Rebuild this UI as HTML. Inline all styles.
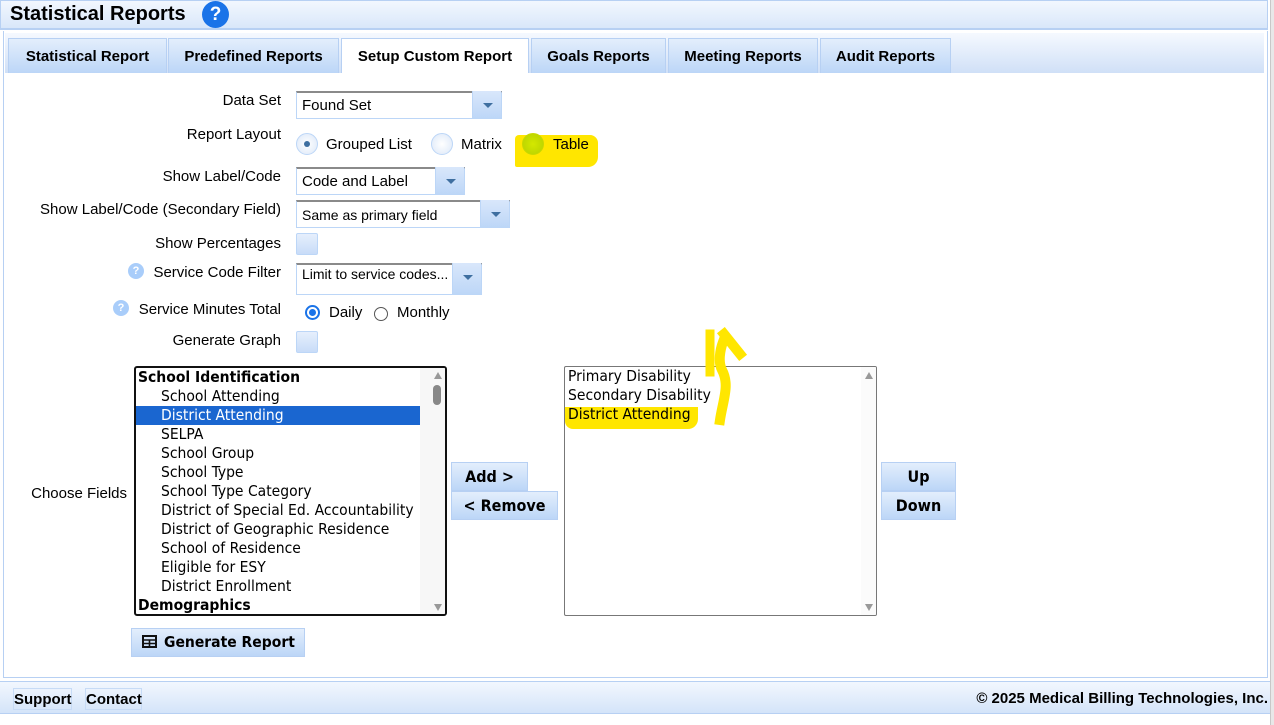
<!DOCTYPE html>
<html><head><meta charset="utf-8"><style>
*{box-sizing:border-box;margin:0;padding:0}
body{width:1274px;height:725px;position:relative;background:#fff;font-family:"Liberation Sans",Arial,sans-serif;overflow:hidden;color:#000}
.a{position:absolute}
.hdr{left:0;top:0;width:1268px;height:30px;background:linear-gradient(#f2f7fe,#d9e7fa);border:1px solid #b7d0f3;border-bottom:2px solid #b7d0f3}
.main{left:3px;top:31px;width:1265px;height:647px;border:1px solid #b7d0f3;border-top:none}
.tabbar{left:5px;top:33px;width:1259px;height:40px;background:linear-gradient(#f5f9ff,#d0e0f7)}
.tab{position:absolute;top:38px;height:35px;background:linear-gradient(#e3eefc,#bcd6f7);border:1px solid #b7d0f3;border-bottom:none;font-weight:bold;font-size:15px;text-align:center;line-height:35px}
.tab.act{background:#fff}
.lbl{position:absolute;font-size:15px;text-align:right;right:993px;white-space:nowrap}
.sel{position:absolute;height:28px;border:1px solid #bcd6f7;border-top:2px solid #8a8a8a;background:#fff;font-size:15px;line-height:26px;padding-left:5px}
.sel .b{position:absolute;right:0;top:-2px;width:29px;height:28px;background:linear-gradient(#d9e7fb,#bcd6f7);border-left:1px solid #bcd6f7}
.sel .b:after{content:"";position:absolute;left:10px;top:12px;border-left:5px solid transparent;border-right:5px solid transparent;border-top:5px solid #3f6fa0}
.cb{position:absolute;width:22px;height:22px;border:1px solid #bcd6f7;background:linear-gradient(#e6effc,#c8dcf8);border-radius:2px}
.rad{position:absolute;width:22px;height:22px;border-radius:50%;border:1px solid #bcd6f7;background:radial-gradient(#fff,#dbe7f8)}
.txt{position:absolute;font-size:15px;white-space:nowrap}
.list{position:absolute;font-family:"DejaVu Sans Condensed","DejaVu Sans",sans-serif;font-size:15.5px;line-height:19px;background:#fff}
.list div{height:19px;white-space:nowrap;padding-left:25px}
.list div.g{font-weight:bold;padding-left:2px}
.btn{position:absolute;background:linear-gradient(#e3eefc,#bcd6f7);border:1px solid #b7d0f3;font-family:"DejaVu Sans Condensed","DejaVu Sans",sans-serif;font-weight:bold;font-size:16px;text-align:center;line-height:27px}
.q{position:absolute;width:16px;height:16px;border-radius:50%;background:#a9cdfa;color:#fff;font-size:11px;font-weight:bold;text-align:center;line-height:16px}
</style></head><body>
<div class="a hdr"></div>
<div class="a" style="left:10px;top:3px;font-size:20px;font-weight:bold">Statistical Reports</div>
<div class="a" style="left:202px;top:1px;width:27px;height:27px;border-radius:50%;background:#1a73e8;color:#fff;font-weight:bold;font-size:19px;text-align:center;line-height:27px">?</div>
<div class="a main"></div>
<div class="a tabbar"></div>
<div class="tab" style="left:8px;width:159px">Statistical Report</div>
<div class="tab" style="left:168px;width:171px">Predefined Reports</div>
<div class="tab act" style="left:341px;width:188px">Setup Custom Report</div>
<div class="tab" style="left:531px;width:135px">Goals Reports</div>
<div class="tab" style="left:668px;width:150px">Meeting Reports</div>
<div class="tab" style="left:820px;width:131px">Audit Reports</div>

<div class="lbl" style="top:92px">Data Set</div>
<div class="sel" style="left:296px;top:91px;width:206px">Found Set<div class="b"></div></div>

<div class="lbl" style="top:126px">Report Layout</div>
<div class="a" style="left:515px;top:135px;width:83px;height:32px;background:#ffe600;border-radius:4px 8px 10px 2px"></div>
<div class="rad" style="left:296px;top:133px"><div style="position:absolute;left:7px;top:7px;width:6px;height:6px;border-radius:50%;background:#3f6fa0"></div></div>
<div class="txt" style="left:326px;top:136px">Grouped List</div>
<div class="rad" style="left:431px;top:133px"></div>
<div class="txt" style="left:461px;top:136px">Matrix</div>
<div class="a" style="left:522px;top:133px;width:22px;height:22px;border-radius:50%;background:radial-gradient(#d4e800,#b6d000);border:1px solid #c8d800"></div>
<div class="txt" style="left:553px;top:136px">Table</div>

<div class="lbl" style="top:168px">Show Label/Code</div>
<div class="sel" style="left:296px;top:167px;width:169px">Code and Label<div class="b"></div></div>
<div class="lbl" style="top:201px">Show Label/Code (Secondary Field)</div>
<div class="sel" style="left:296px;top:200px;width:214px;font-size:14px">Same as primary field<div class="b"></div></div>
<div class="lbl" style="top:235px">Show Percentages</div>
<div class="cb" style="left:296px;top:233px"></div>
<div class="q" style="left:128px;top:263px">?</div>
<div class="lbl" style="top:264px">Service Code Filter</div>
<div class="sel" style="left:296px;top:263px;width:186px;height:32px;font-size:14px;line-height:16px;padding-top:1px">Limit to service codes...<div class="b" style="height:32px"></div></div>
<div class="q" style="left:113px;top:300px">?</div>
<div class="lbl" style="top:301px">Service Minutes Total</div>
<div class="a" style="left:305px;top:305px;width:15px;height:15px;border-radius:50%;border:2px solid #1a73e8"><div style="position:absolute;left:2px;top:2px;width:7px;height:7px;border-radius:50%;background:#1a73e8"></div></div>
<div class="txt" style="left:329px;top:304px">Daily</div>
<div class="a" style="left:374px;top:307px;width:14px;height:14px;border-radius:50%;border:1px solid #555"></div>
<div class="txt" style="left:397px;top:304px">Monthly</div>
<div class="lbl" style="top:332px">Generate Graph</div>
<div class="cb" style="left:296px;top:331px"></div>

<div class="lbl" style="top:485px;right:1147px">Choose Fields</div>
<div class="list" style="left:134px;top:366px;width:313px;height:250px;border:2px solid #111;border-radius:3px;overflow:hidden">
<div class="g">School Identification</div><div>School Attending</div><div style="background:#1a66d0;color:#fff;width:295px">District Attending</div><div>SELPA</div><div>School Group</div><div>School Type</div><div>School Type Category</div><div>District of Special Ed. Accountability</div><div>District of Geographic Residence</div><div>School of Residence</div><div>Eligible for ESY</div><div>District Enrollment</div><div class="g">Demographics</div>
<div class="a" style="right:0;top:0;width:15px;height:246px;background:#f7f7f7"></div>
<div class="a" style="right:3px;top:4px;border-left:4px solid transparent;border-right:4px solid transparent;border-bottom:7px solid #999;height:0;padding:0"></div>
<div class="a" style="right:4px;top:17px;width:8px;height:20px;border-radius:4px;background:#888;padding:0"></div>
<div class="a" style="right:3px;top:236px;border-left:4px solid transparent;border-right:4px solid transparent;border-top:7px solid #999;height:0;padding:0"></div>
</div>

<div class="btn" style="left:451px;top:462px;width:77px;height:29px">Add &gt;</div>
<div class="btn" style="left:451px;top:491px;width:107px;height:29px">&lt; Remove</div>

<div class="list" style="left:564px;top:366px;width:313px;height:250px;border:1px solid #777;border-radius:2px;overflow:hidden">
<div class="a" style="left:0;top:40px;width:133px;height:22px;background:#ffe600;border-radius:0 0 10px 8px;padding:0"></div>
<div style="padding-left:3px;position:relative">Primary Disability</div><div style="padding-left:3px;position:relative">Secondary Disability</div><div style="padding-left:3px;position:relative">District Attending</div>
<div class="a" style="right:0;top:0;width:15px;height:248px;background:#fbfbfb;padding:0"></div>
<div class="a" style="right:3px;top:5px;border-left:4px solid transparent;border-right:4px solid transparent;border-bottom:7px solid #999;height:0;padding:0"></div>
<div class="a" style="right:3px;top:237px;border-left:4px solid transparent;border-right:4px solid transparent;border-top:7px solid #999;height:0;padding:0"></div>
</div>
<svg class="a" style="left:690px;top:320px" width="70" height="110"><g stroke="#ffe600" fill="none" stroke-linecap="square"><path d="M30 100 C33 80 40 65 32 50 C28 42 30 30 33 22" stroke-width="10"/><path d="M20 14 L20 52" stroke-width="9"/><path d="M34 14 L50 34" stroke-width="10"/></g></svg>

<div class="btn" style="left:881px;top:462px;width:75px;height:29px">Up</div>
<div class="btn" style="left:881px;top:491px;width:75px;height:29px">Down</div>

<div class="btn" style="left:131px;top:628px;width:174px;height:29px;text-align:left;padding-left:32px;font-size:15.5px">Generate Report</div>
<svg class="a" style="left:142px;top:635px" width="15" height="13"><rect x="1" y="1" width="13" height="11" fill="none" stroke="#111" stroke-width="2"/><path d="M1 5H14M1 8.5H14M7.5 5V12" stroke="#111" stroke-width="1.6"/></svg>

<div class="a" style="left:0;top:681px;width:1270px;height:33px;background:linear-gradient(#f2f7fe,#d4e4f9);border-top:1px solid #b7d0f3;border-bottom:1px solid #b7d0f3"></div>
<div class="a" style="left:13px;top:688px;width:59px;height:22px;border:1px solid #c7dbf6;font-weight:bold;font-size:15px;line-height:22px;text-align:center">Support</div>
<div class="a" style="left:85px;top:688px;width:57px;height:22px;border:1px solid #c7dbf6;font-weight:bold;font-size:15px;line-height:22px;text-align:center">Contact</div>
<div class="a" style="right:6px;top:690px;font-weight:bold;font-size:15px">© 2025 Medical Billing Technologies, Inc.</div>
<div class="a" style="left:1270px;top:0;width:4px;height:725px;background:#e8e8e8;border-left:1px solid #c8c8c8"></div>
</body></html>
